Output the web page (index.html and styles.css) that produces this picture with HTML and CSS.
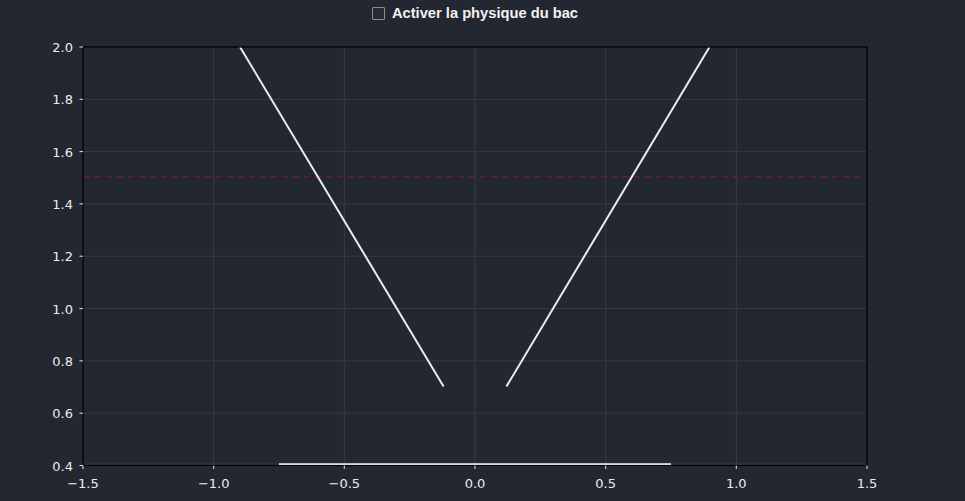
FILE: index.html
```html
<!DOCTYPE html>
<html>
<head>
  <title>Bac</title>
  <link rel="stylesheet" href="styles.css">
</head>
<body>
  <div class="toolbar">
    <label class="toggle">
      <input type="checkbox" class="toggle-box">
      <span>Activer la physique du bac</span>
    </label>
  </div>

  <svg class="plot" width="965" height="473" viewBox="0 28 965 473">
    <!-- grid -->
    <g class="grid">
      <line x1="213.7" y1="47" x2="213.7" y2="465.5"/>
      <line x1="344.3" y1="47" x2="344.3" y2="465.5"/>
      <line x1="475" y1="47" x2="475" y2="465.5"/>
      <line x1="605.7" y1="47" x2="605.7" y2="465.5"/>
      <line x1="736.3" y1="47" x2="736.3" y2="465.5"/>
      <line x1="83" y1="99.3" x2="867" y2="99.3"/>
      <line x1="83" y1="151.6" x2="867" y2="151.6"/>
      <line x1="83" y1="203.9" x2="867" y2="203.9"/>
      <line x1="83" y1="256.2" x2="867" y2="256.2"/>
      <line x1="83" y1="308.6" x2="867" y2="308.6"/>
      <line x1="83" y1="360.9" x2="867" y2="360.9"/>
      <line x1="83" y1="413.2" x2="867" y2="413.2"/>
      <line x1="83" y1="464" x2="867" y2="464"/>
    </g>

    <!-- niveau cible -->
    <line class="level" x1="84" y1="176.8" x2="867" y2="176.8"/>

    <!-- parois -->
    <polyline class="wall" points="240,47 443.6,386.5"/>
    <polyline class="wall" points="506.4,386.5 709.5,47"/>
    <line class="floor" x1="279" y1="464.5" x2="671" y2="464.5"/>

    <!-- cadre -->
    <rect class="frame" x="83" y="47" width="784" height="418.5"/>

    <!-- ticks -->
    <g class="ticks">
      <line x1="83" y1="465.5" x2="83" y2="469"/>
      <line x1="213.7" y1="465.5" x2="213.7" y2="469"/>
      <line x1="344.3" y1="465.5" x2="344.3" y2="469"/>
      <line x1="475" y1="465.5" x2="475" y2="469"/>
      <line x1="605.7" y1="465.5" x2="605.7" y2="469"/>
      <line x1="736.3" y1="465.5" x2="736.3" y2="469"/>
      <line x1="867" y1="465.5" x2="867" y2="469"/>
      <line x1="79.5" y1="47" x2="83" y2="47"/>
      <line x1="79.5" y1="99.3" x2="83" y2="99.3"/>
      <line x1="79.5" y1="151.6" x2="83" y2="151.6"/>
      <line x1="79.5" y1="203.9" x2="83" y2="203.9"/>
      <line x1="79.5" y1="256.2" x2="83" y2="256.2"/>
      <line x1="79.5" y1="308.6" x2="83" y2="308.6"/>
      <line x1="79.5" y1="360.9" x2="83" y2="360.9"/>
      <line x1="79.5" y1="413.2" x2="83" y2="413.2"/>
      <line x1="79.5" y1="465.5" x2="83" y2="465.5"/>
    </g>

    <g class="xlabels">
      <text x="83" y="488">−1.5</text>
      <text x="213.7" y="488">−1.0</text>
      <text x="344.3" y="488">−0.5</text>
      <text x="475" y="488">0.0</text>
      <text x="605.7" y="488">0.5</text>
      <text x="736.3" y="488">1.0</text>
      <text x="867" y="488">1.5</text>
    </g>

    <g class="ylabels">
      <text x="73" y="52">2.0</text>
      <text x="73" y="104.3">1.8</text>
      <text x="73" y="156.6">1.6</text>
      <text x="73" y="208.9">1.4</text>
      <text x="73" y="261.2">1.2</text>
      <text x="73" y="313.6">1.0</text>
      <text x="73" y="365.9">0.8</text>
      <text x="73" y="418.2">0.6</text>
      <text x="73" y="470.5">0.4</text>
    </g>
  </svg>
</body>
</html>
```

FILE: styles.css
```css
* {
  margin: 0;
  padding: 0;
  box-sizing: border-box;
}

body {
  background-color: #222731;
  font-family: "Liberation Sans", Arial, sans-serif;
  width: 965px;
  height: 501px;
  overflow: hidden;
}

.toolbar {
  height: 28px;
  display: flex;
  justify-content: center;
  align-items: flex-start;
  padding-top: 5px;
  padding-right: 15px;
}

.toggle {
  display: flex;
  align-items: center;
  gap: 7px;
  color: #f2f2f2;
  font-size: 14.7px;
  font-weight: bold;
}

.toggle-box {
  appearance: none;
  width: 13px;
  height: 13px;
  border: 1px solid #8a8d93;
  background-color: #262a31;
  border-radius: 1px;
}

.plot {
  display: block;
}

.grid line {
  stroke: #363c46;
  stroke-width: 1;
}

.level {
  stroke: #62202c;
  stroke-width: 1.6;
  stroke-dasharray: 6 5;
}

.wall {
  stroke: #ededed;
  stroke-width: 2;
  fill: none;
}

.floor {
  stroke: #f2f2f2;
  stroke-width: 2.5;
}

.frame {
  fill: none;
  stroke: #000000;
  stroke-width: 1.2;
}

.ticks line {
  stroke: #e0e0e0;
  stroke-width: 1;
}

.xlabels text,
.ylabels text {
  fill: #ececec;
  font-family: "DejaVu Sans", sans-serif;
  font-size: 13px;
}

.xlabels text {
  text-anchor: middle;
}

.ylabels text {
  text-anchor: end;
}
```
